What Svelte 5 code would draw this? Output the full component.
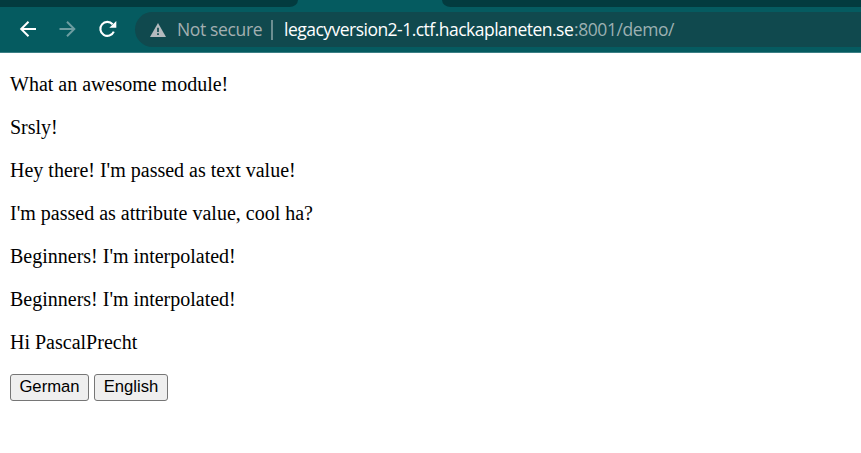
<script>
  const messages = [
    'What an awesome module!',
    'Srsly!',
    "Hey there! I'm passed as text value!",
    "I'm passed as attribute value, cool ha?",
    "Beginners! I'm interpolated!",
    "Beginners! I'm interpolated!",
    'Hi PascalPrecht'
  ];
</script>

<div class="window">
  <div class="tabs">
    <div class="tab left"></div>
    <div class="tab right"></div>
  </div>
  <header class="toolbar">
    <nav class="nav">
      <svg width="20" height="20" viewBox="0 0 20 20" fill="none" stroke="#fff" stroke-width="2">
        <path d="M18 10H3.5M10.5 2.7L3.2 10l7.3 7.3" />
      </svg>
      <svg width="20" height="20" viewBox="0 0 20 20" fill="none" stroke="#6d9da1" stroke-width="2">
        <path d="M1.5 10H16M9 2.7l7.3 7.3L9 17.3" />
      </svg>
      <svg width="20" height="20" viewBox="0 0 20 20">
        <path d="M14.6 5.2A7 7 0 1 0 15.8 12.6" fill="none" stroke="#fff" stroke-width="2.1" />
        <path d="M18.3 2V8.8H11.3Z" fill="#fff" />
      </svg>
    </nav>
    <div class="omnibox">
      <svg width="16" height="14" viewBox="0 0 16 14">
        <path d="M8 0L16 14H0Z" fill="#b4babe" />
        <path d="M8 4.8V9M8 10.2V12" stroke="#10494e" stroke-width="1.7" />
      </svg>
      <span class="secure">Not secure</span>
      <span class="divider"></span>
      <span class="host">legacyversion2-1.ctf.hackaplaneten.se</span><span class="path">:8001/demo/</span>
    </div>
  </header>
  <main>
    {#each messages as message}
      <p>{message}</p>
    {/each}
    <div class="buttons">
      <button class="german">German</button>
      <button class="english">English</button>
    </div>
  </main>
</div>

<style>
  .window {
    height: 453px;
    overflow: hidden;
    background: #fff;
  }
  .tabs {
    display: flex;
    justify-content: space-between;
    height: 7px;
    background: #055b60;
  }
  .tab {
    background: #033b3f;
  }
  .left {
    width: 298px;
    border-bottom-right-radius: 10px 8px;
  }
  .right {
    width: 419px;
    border-bottom-left-radius: 10px 8px;
  }
  .toolbar {
    box-sizing: border-box;
    display: flex;
    height: 46px;
    padding-top: 5px;
    background: #055b60;
    border-bottom: 1px solid #3b7f85;
  }
  .nav {
    display: flex;
    align-items: center;
    gap: 20px;
    box-sizing: border-box;
    width: 135px;
    height: 34px;
    padding-left: 18px;
    flex: none;
  }
  .nav svg {
    display: block;
    flex: none;
  }
  .omnibox {
    display: flex;
    align-items: center;
    flex: 1;
    box-sizing: border-box;
    height: 35px;
    padding-left: 15px;
    background: #10494e;
    border-radius: 18px 0 0 18px;
    font: 17.5px/35px "Open Sans", "Noto Sans", sans-serif;
    white-space: nowrap;
  }
  .omnibox svg {
    flex: none;
  }
  .secure {
    width: 94px;
    margin-left: 11px;
    color: #a3afb1;
    letter-spacing: -0.35px;
  }
  .divider {
    width: 2px;
    height: 20px;
    margin-right: 11px;
    background: #6d8e91;
  }
  .host {
    width: 290px;
    color: #fff;
    letter-spacing: -0.52px;
  }
  .path {
    color: #9cb0b2;
    letter-spacing: -0.42px;
  }
  main {
    padding: 20px 10px 0;
    color: #000;
    font: 20px/23px "Liberation Serif", "Times New Roman", serif;
  }
  p {
    margin: 0 0 20px;
  }
  .buttons {
    display: flex;
    gap: 5px;
  }
  button {
    box-sizing: border-box;
    height: 27px;
    margin: 0;
    padding: 0 0 1px;
    border: 1px solid #767676;
    border-radius: 3px;
    background: #efefef;
    color: #000;
    font: 16.667px/22px "Liberation Sans", Arial, sans-serif;
  }
  .german {
    width: 79px;
  }
  .english {
    width: 74px;
  }
</style>
